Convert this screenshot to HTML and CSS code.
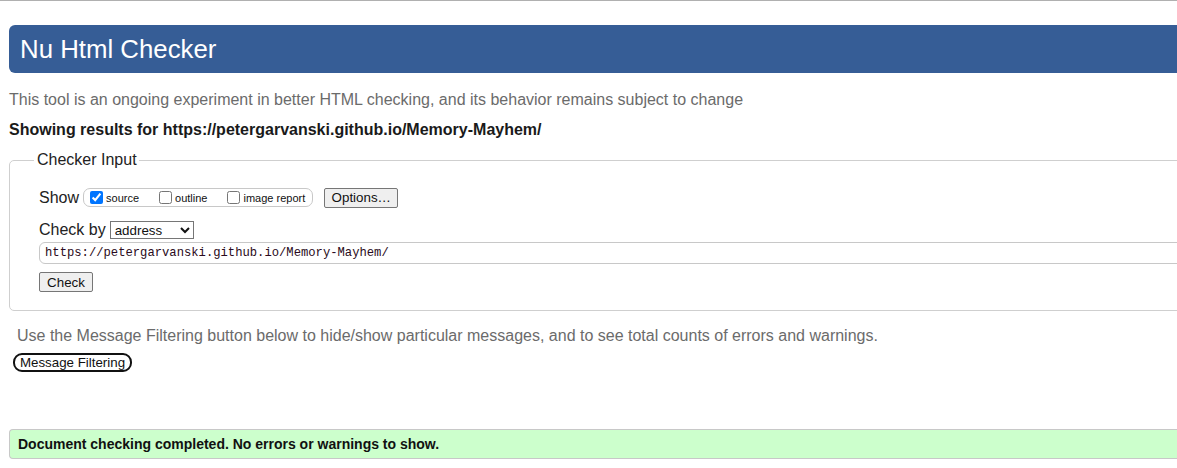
FILE: index.html
```html
<!DOCTYPE html>
<html lang="en">
<head>
<meta charset="utf-8">
<title>Nu Html Checker</title>
<link rel="stylesheet" href="styles.css">
</head>
<body>
<div class="topline"></div>
<div class="page">
  <h1 class="header">Nu Html Checker</h1>
  <p class="intro">This tool is an ongoing experiment in better HTML checking, and its behavior remains subject to change</p>
  <p class="results">Showing results for https://petergarvanski.github.io/Memory-Mayhem/</p>

  <fieldset class="input-box">
    <legend class="legend">Checker Input</legend>
    <div class="row show-row">
      <span class="label">Show</span>
      <span class="pill">
        <label class="opt"><input type="checkbox" checked> source</label>
        <label class="opt"><input type="checkbox"> outline</label>
        <label class="opt"><input type="checkbox"> image report</label>
      </span>
      <button class="btn btn-options" type="button">Options…</button>
    </div>
    <div class="row check-row">
      <span class="label">Check by</span>
      <select class="select"><option>address</option></select>
    </div>
    <input class="url" type="text" value="https://petergarvanski.github.io/Memory-Mayhem/">
    <div class="row">
      <button class="btn btn-check" type="button">Check</button>
    </div>
  </fieldset>

  <p class="filter-note">Use the Message Filtering button below to hide/show particular messages, and to see total counts of errors and warnings.</p>
  <button class="btn-filter" type="button">Message Filtering</button>

  <div class="success">Document checking completed. No errors or warnings to show.</div>
</div>
</body>
</html>
```
FILE: styles.css
```css
html {
  overflow: hidden;
}
body {
  margin: 0;
  font-family: "Liberation Sans", Arial, sans-serif;
  color: #222;
  background: #fff;
}
.topline {
  height: 1px;
  background: #b0b0b0;
}
.page {
  width: 1240px;
  padding-left: 9px;
}
.header {
  margin: 24px 0 0 0;
  height: 48px;
  line-height: 48px;
  background: #365d96;
  color: #fff;
  font-size: 25.8px;
  font-weight: normal;
  padding-left: 11px;
  border-radius: 6px 0 0 6px;
}
.intro {
  margin: 17px 0 0 0;
  font-size: 16px;
  line-height: 19px;
  color: #6b6b6b;
}
.results {
  margin: 11px 0 0 0;
  font-size: 16px;
  line-height: 19px;
  font-weight: bold;
  color: #1a1a1a;
}
.input-box {
  margin: 12px 0 0 0;
  padding: 18px 0 18px 29px;
  border: 1px solid #cfcfcf;
  border-radius: 5px 0 0 5px;
  min-inline-size: 0;
}
.legend {
  margin-left: -5px;
  padding: 0 2px 0 3px;
  font-size: 16px;
  color: #222;
}
.row {
  display: flex;
  align-items: center;
}
.label {
  font-size: 16px;
  color: #222;
  margin-right: 4px;
}
.show-row {
  height: 21px;
}
.pill {
  display: flex;
  align-items: center;
  height: 17px;
  border: 1px solid #c8c8c8;
  border-radius: 7px;
  padding: 0 7px 0 2px;
}
.opt {
  display: flex;
  align-items: center;
  font-size: 11px;
  color: #111;
  margin-right: 16px;
}
.opt:last-child {
  margin-right: 0;
}
.opt input {
  margin: 0 3px 0 4px;
  width: 13px;
  height: 13px;
}
.btn {
  font-family: "Liberation Sans", Arial, sans-serif;
  font-size: 13.33px;
  color: #111;
  background: #efefef;
  border: 1px solid #767676;
  border-radius: 2px;
  height: 20px;
  padding: 0;
}
.btn-options {
  margin-left: 11px;
  width: 74px;
}
.check-row {
  margin-top: 12px;
  height: 20px;
}
.select {
  font-family: "Liberation Sans", Arial, sans-serif;
  font-size: 13.33px;
  width: 84px;
  height: 18px;
  margin-left: 0;
  color: #111;
  border: 1px solid #767676;
  border-radius: 0;
  background: #fff;
}
.url {
  display: block;
  box-sizing: border-box;
  width: 1200px;
  height: 22px;
  margin-top: 2px;
  padding: 0 5px;
  border: 1px solid #c8c8c8;
  border-radius: 6px;
  font-family: "Liberation Mono", monospace;
  font-size: 12.2px;
  color: #2a0a20;
}
.btn-check {
  width: 54px;
  margin-top: 8px;
}
.filter-note {
  margin: 15px 0 0 8px;
  font-size: 16px;
  line-height: 19px;
  color: #6b6b6b;
}
.btn-filter {
  display: block;
  margin: 8px 0 0 4px;
  height: 19px;
  width: 119px;
  padding: 0;
  font-family: "Liberation Sans", Arial, sans-serif;
  font-size: 13.33px;
  color: #111;
  background: #fff;
  border: 2px solid #111;
  border-radius: 9px;
}
.success {
  margin-top: 57px;
  height: 28px;
  line-height: 28px;
  background: #ccffcc;
  border: 1px solid #c8c8c8;
  border-right: none;
  border-radius: 4px 0 0 4px;
  padding-left: 8px;
  font-size: 14px;
  font-weight: bold;
  color: #111;
}
```
